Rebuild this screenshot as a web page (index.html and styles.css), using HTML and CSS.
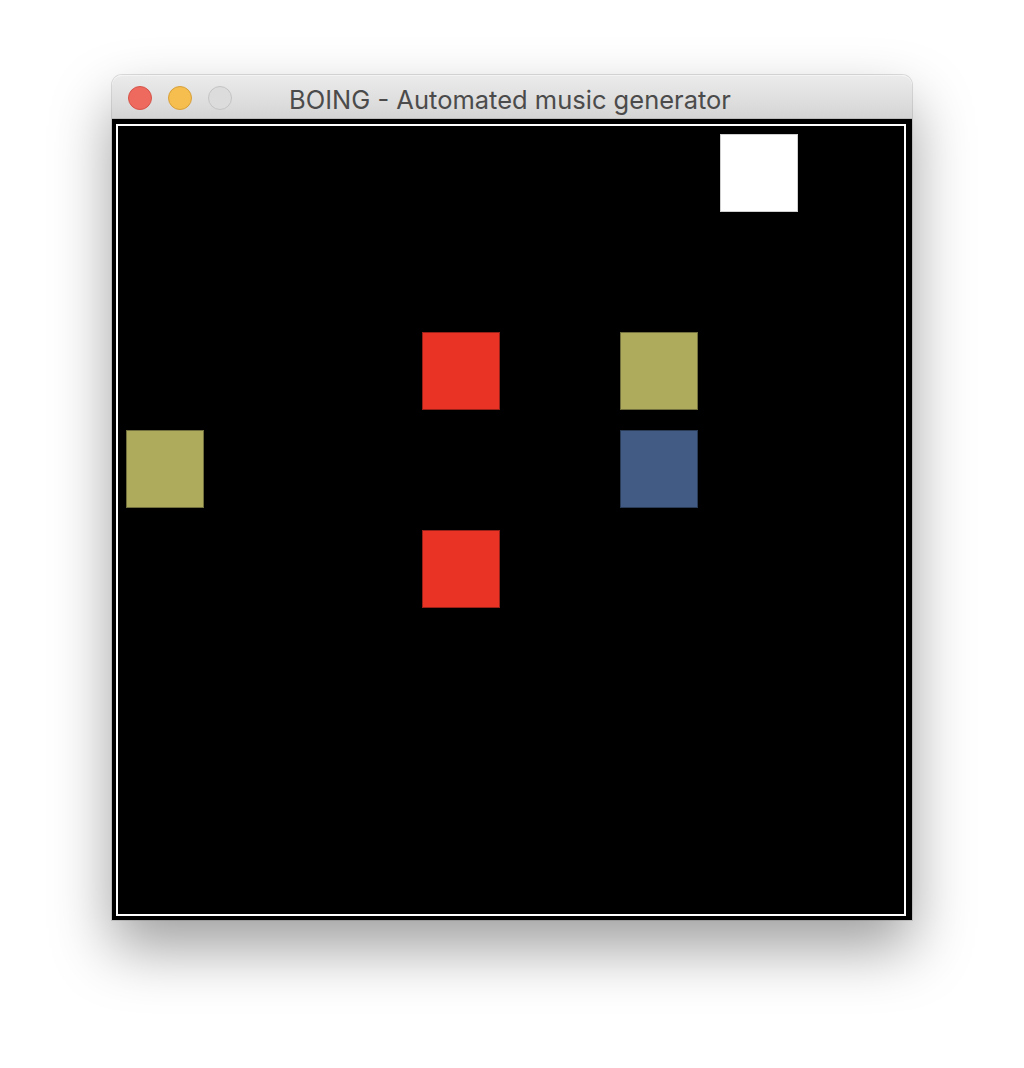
FILE: index.html
```html
<!DOCTYPE html>
<html>
<head>
<meta charset="utf-8">
<title>BOING</title>
<link rel="stylesheet" href="styles.css">
</head>
<body>
<div class="window">
  <div class="titlebar">
    <div class="lights">
      <span class="light close"></span>
      <span class="light minimize"></span>
      <span class="light zoom"></span>
    </div>
    <div class="title">BOING - Automated music generator</div>
  </div>
  <div class="canvas">
    <div class="frame"></div>
    <div class="cell white" style="left:608px;top:15px"></div>
    <div class="cell red" style="left:310px;top:213px"></div>
    <div class="cell olive" style="left:508px;top:213px"></div>
    <div class="cell olive" style="left:14px;top:311px"></div>
    <div class="cell blue" style="left:508px;top:311px"></div>
    <div class="cell red" style="left:310px;top:411px"></div>
  </div>
</div>
</body>
</html>
```
FILE: styles.css
```css
html, body {
  margin: 0;
  padding: 0;
  background: #ffffff;
}
body {
  width: 1024px;
  height: 1068px;
  padding-top: 75px;
  box-sizing: border-box;
  overflow: hidden;
}
.window {
  margin-left: 112px;
  width: 800px;
  border-radius: 10px 10px 0 0;
  box-shadow: 0 28px 60px rgba(0,0,0,0.38), 0 0 0 1px rgba(0,0,0,0.12);
}
.titlebar {
  position: relative;
  height: 44px;
  box-sizing: border-box;
  background: linear-gradient(#ebebeb, #d5d5d5);
  border-radius: 10px 10px 0 0;
  border-top: 1px solid #f4f4f4;
  border-bottom: 1px solid #b9b9b9;
  display: flex;
  align-items: center;
  justify-content: center;
}
.lights {
  position: absolute;
  left: 16px;
  top: 10px;
  display: flex;
  gap: 16px;
}
.light {
  width: 24px;
  height: 24px;
  border-radius: 50%;
  box-sizing: border-box;
}
.close { background: #ee6a5e; border: 1px solid #d5544a; }
.minimize { background: #f5be4f; border: 1px solid #d8a03a; }
.zoom { background: #dcdcdc; border: 1px solid #c4c4c4; }
.title {
  font-family: "Helvetica Neue", "Inter", "Noto Sans", sans-serif;
  font-size: 25.5px;
  color: #4b4b4b;
  margin-top: 4px;
  margin-right: 4px;
}
.canvas {
  position: relative;
  height: 801px;
  background: #000;
}
.frame {
  position: absolute;
  left: 4px;
  top: 5px;
  width: 790px;
  height: 792px;
  box-sizing: border-box;
  border: 2px solid #ffffff;
}
.cell {
  position: absolute;
  width: 78px;
  height: 78px;
  box-sizing: border-box;
  border: 1px solid rgba(0,0,0,0.35);
}
.white { background: #ffffff; border-color: #cfcfcf; }
.red { background: #e93425; }
.olive { background: #aeac5c; }
.blue { background: #415b84; }
```
